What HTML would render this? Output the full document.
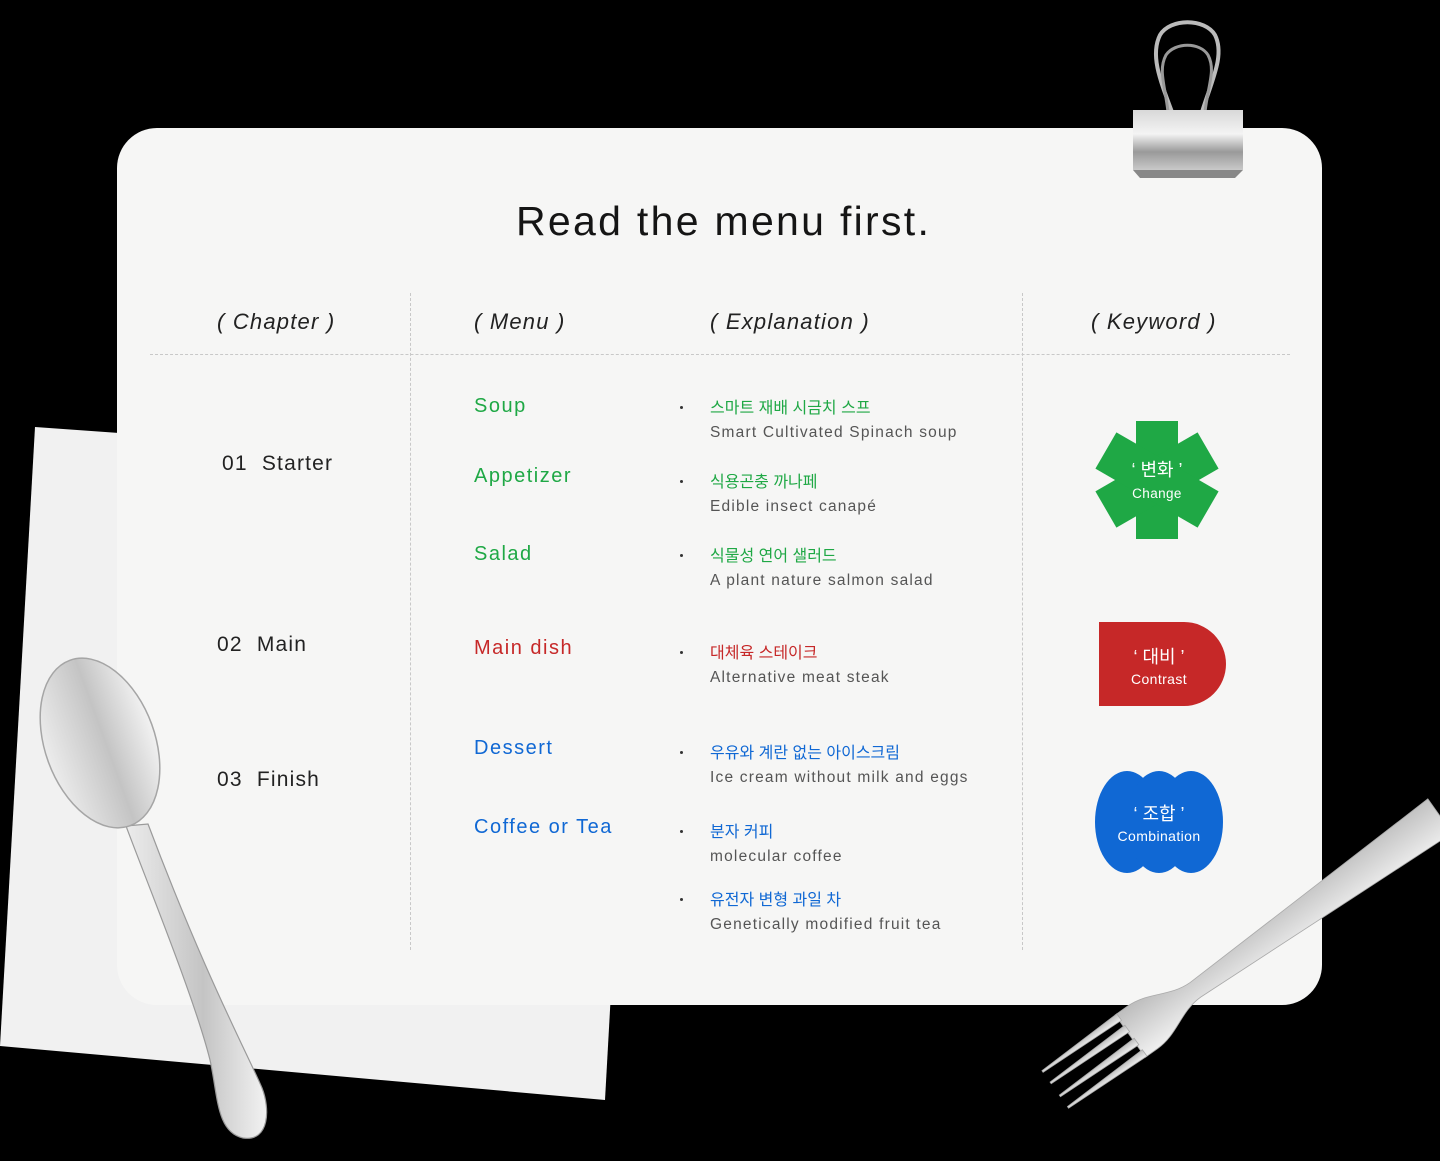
<!DOCTYPE html>
<html><head><meta charset="utf-8">
<style>
*{margin:0;padding:0;box-sizing:border-box}
body{width:1440px;height:1161px;background:#000;position:relative;overflow:hidden;font-family:"Liberation Sans","Noto Sans CJK KR",sans-serif}
.card{position:absolute;left:117px;top:128px;width:1205px;height:877px;background:#f6f6f5;border-radius:40px}
.t{position:absolute;white-space:nowrap}
.title{left:516px;top:198px;font-size:41px;color:#151515;letter-spacing:2.3px}
.h{font-size:22px;font-style:italic;color:#222;top:309px;letter-spacing:1.2px}
.ch{font-size:21px;color:#222;letter-spacing:1.2px}
.m{font-size:20px;letter-spacing:1.5px}
.k{font-size:16px}
.e{font-size:15.5px;color:#555;letter-spacing:1.2px}
.g{color:#1fa845}.r{color:#c62828}.b{color:#1068d4}
.dot{position:absolute;width:3px;height:3px;border-radius:50%;background:#333}
.vl{position:absolute;top:293px;height:657px;border-left:1px dashed #c8c8c8}
.hl{position:absolute;left:150px;top:354px;width:1140px;border-top:1px dashed #c8c8c8}
.badge{position:absolute;color:#fff;text-align:center;width:130px}
</style></head><body>
<svg style="position:absolute;left:0;top:0" width="1440" height="1161">
<polygon points="35,427 640,470 605,1100 0,1046" fill="#f1f1f1"/>
</svg>
<div class="card"></div>
<div class="t title">Read the menu first.</div>
<div class="t h" style="left:217px">( Chapter )</div>
<div class="t h" style="left:474px">( Menu )</div>
<div class="t h" style="left:710px">( Explanation )</div>
<div class="t h" style="left:1091px">( Keyword )</div>
<div class="hl"></div>
<div class="vl" style="left:410px"></div>
<div class="vl" style="left:1022px"></div>

<div class="t ch" style="left:222px;top:452px">01&nbsp; Starter</div>
<div class="t ch" style="left:217px;top:633px">02&nbsp; Main</div>
<div class="t ch" style="left:217px;top:768px">03&nbsp; Finish</div>

<div class="t m g" style="left:474px;top:395px">Soup</div>
<div class="t m g" style="left:474px;top:465px">Appetizer</div>
<div class="t m g" style="left:474px;top:543px">Salad</div>
<div class="t m r" style="left:474px;top:637px">Main dish</div>
<div class="t m b" style="left:474px;top:737px">Dessert</div>
<div class="t m b" style="left:474px;top:816px">Coffee or Tea</div>

<div class="dot" style="left:680px;top:406px"></div>
<div class="t k g" style="left:710px;top:394px">스마트 재배 시금치 스프</div>
<div class="t e" style="left:710px;top:424px">Smart Cultivated Spinach soup</div>
<div class="dot" style="left:680px;top:480px"></div>
<div class="t k g" style="left:710px;top:468px">식용곤충 까나페</div>
<div class="t e" style="left:710px;top:498px">Edible insect canapé</div>
<div class="dot" style="left:680px;top:554px"></div>
<div class="t k g" style="left:710px;top:542px">식물성 연어 샐러드</div>
<div class="t e" style="left:710px;top:572px">A plant nature salmon salad</div>
<div class="dot" style="left:680px;top:651px"></div>
<div class="t k r" style="left:710px;top:639px">대체육 스테이크</div>
<div class="t e" style="left:710px;top:669px">Alternative meat steak</div>
<div class="dot" style="left:680px;top:751px"></div>
<div class="t k b" style="left:710px;top:739px">우유와 계란 없는 아이스크림</div>
<div class="t e" style="left:710px;top:769px">Ice cream without milk and eggs</div>
<div class="dot" style="left:680px;top:830px"></div>
<div class="t k b" style="left:710px;top:818px">분자 커피</div>
<div class="t e" style="left:710px;top:848px">molecular coffee</div>
<div class="dot" style="left:680px;top:898px"></div>
<div class="t k b" style="left:710px;top:886px">유전자 변형 과일 차</div>
<div class="t e" style="left:710px;top:916px">Genetically modified fruit tea</div>

<svg style="position:absolute;left:0;top:0" width="1440" height="1161">
<defs>
<linearGradient id="sp" x1="0" y1="0" x2="1" y2="0"><stop offset="0" stop-color="#ececec"/><stop offset=".55" stop-color="#c4c4c4"/><stop offset="1" stop-color="#f2f2f2"/></linearGradient>
<linearGradient id="cl" x1="0" y1="0" x2="0" y2="1"><stop offset="0" stop-color="#d8d8d8"/><stop offset=".4" stop-color="#f4f4f4"/><stop offset=".7" stop-color="#9a9a9a"/><stop offset="1" stop-color="#c9c9c9"/></linearGradient>
<linearGradient id="fk" x1="0" y1="0" x2="0" y2="1"><stop offset="0" stop-color="#f0f0f0"/><stop offset="1" stop-color="#bdbdbd"/></linearGradient>
</defs>
<g fill="#1fa845" transform="translate(1157,480)">
<rect x="-21" y="-59" width="42" height="118"/>
<rect x="-21" y="-59" width="42" height="118" transform="rotate(60)"/>
<rect x="-21" y="-59" width="42" height="118" transform="rotate(120)"/>
</g>
<path d="M1099,622 H1184 A42,42 0 0 1 1184,706 H1099 Z" fill="#c62828"/>
<g fill="#1068d4">
<ellipse cx="1127" cy="822" rx="32" ry="51"/>
<ellipse cx="1159" cy="822" rx="32" ry="51"/>
<ellipse cx="1191" cy="822" rx="32" ry="51"/>
</g>
<!-- clip -->
<path d="M1172,112 C1160,80 1150,55 1160,35 C1170,18 1205,18 1215,35 C1225,55 1212,80 1202,112" fill="none" stroke="#bbb" stroke-width="4"/>
<path d="M1168,112 C1165,85 1158,70 1166,55 C1175,42 1200,42 1208,55 C1216,70 1208,85 1205,112" fill="none" stroke="#999" stroke-width="3"/>
<rect x="1133" y="110" width="110" height="60" fill="url(#cl)"/>
<path d="M1133,170 h110 l-8,8 h-95z" fill="#888"/>
<!-- spoon -->
<path d="M126,826 C150,890 195,1000 210,1060 C218,1095 216,1132 243,1138 C270,1142 270,1108 262,1088 C248,1055 205,975 148,824 Z" fill="url(#sp)" stroke="#9a9a9a" stroke-width="1.2"/>
<ellipse cx="100" cy="743" rx="55" ry="88" transform="rotate(-20 100 743)" fill="url(#sp)" stroke="#a5a5a5" stroke-width="1.5"/>
<!-- fork -->
<g transform="translate(1440,816) rotate(144.6)" fill="url(#fk)" stroke="#aaa" stroke-width="0.8">
<path d="M0,-21 L300,-9 C325,-9 340,-26 365,-26 L380,-26 L380,26 L365,26 C340,26 325,9 300,9 L0,21 Z"/>
<path d="M378,-26 L472,-23 L472,-21 L378,-18 Z"/>
<path d="M378,-12 L472,-9 L472,-7 L378,-4 Z"/>
<path d="M378,4 L472,7 L472,9 L378,12 Z"/>
<path d="M378,18 L472,21 L472,23 L378,26 Z"/>
</g>
</svg>
<div class="badge" style="left:1092px;top:456px"><div style="font-size:18px">‘ 변화 ’</div><div style="font-size:13.5px;margin-top:4px;letter-spacing:.4px">Change</div></div>
<div class="badge" style="left:1094px;top:643px"><div style="font-size:18px">‘ 대비 ’</div><div style="font-size:14px;margin-top:2px;letter-spacing:.4px">Contrast</div></div>
<div class="badge" style="left:1094px;top:800px"><div style="font-size:18px">‘ 조합 ’</div><div style="font-size:14px;margin-top:2px;letter-spacing:.4px">Combination</div></div>
</body></html>
